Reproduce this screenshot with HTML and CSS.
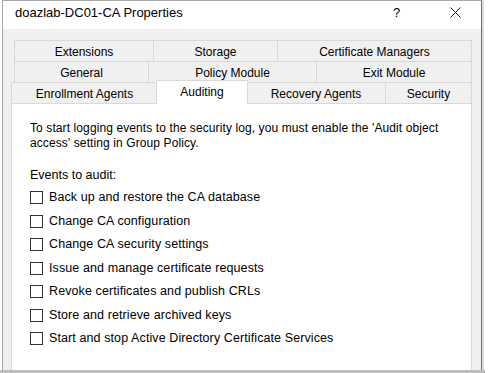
FILE: index.html
```html
<!DOCTYPE html>
<html lang="en">
<head>
    <meta charset="UTF-8">
    <title>doazlab-DC01-CA Properties</title>
    <link rel="stylesheet" href="styles.css">
</head>
<body>
    <div class="window">
        <div class="titlebar">
            <span class="title">doazlab-DC01-CA Properties</span>
            <span class="help">?</span>
            <svg class="close" width="11" height="11" viewBox="0 0 11 11">
                <path d="M0.5 0.5 L10.5 10.5 M10.5 0.5 L0.5 10.5" stroke="#1a1a1a" stroke-width="1" fill="none"/>
            </svg>
        </div>

        <div class="content">
            <div class="tab-row row-1">
                <div class="tab">Extensions</div>
                <div class="tab">Storage</div>
                <div class="tab">Certificate Managers</div>
            </div>
            <div class="tab-row row-2">
                <div class="tab">General</div>
                <div class="tab">Policy Module</div>
                <div class="tab">Exit Module</div>
            </div>
            <div class="tab-row row-3">
                <div class="tab">Enrollment Agents</div>
                <div class="tab active">Auditing</div>
                <div class="tab">Recovery Agents</div>
                <div class="tab">Security</div>
            </div>

            <div class="panel">
                <p class="intro">To start logging events to the security log, you must enable the 'Audit object<br>access' setting in Group Policy.</p>
                <p class="events-label">Events to audit:</p>
                <ul class="events">
                    <li><span class="check"></span>Back up and restore the CA database</li>
                    <li><span class="check"></span>Change CA configuration</li>
                    <li><span class="check"></span>Change CA security settings</li>
                    <li><span class="check"></span>Issue and manage certificate requests</li>
                    <li><span class="check"></span>Revoke certificates and publish CRLs</li>
                    <li><span class="check"></span>Store and retrieve archived keys</li>
                    <li><span class="check"></span>Start and stop Active Directory Certificate Services</li>
                </ul>
            </div>
        </div>
    </div>
    <div class="bottom-edge"></div>
</body>
</html>
```

FILE: styles.css
```css
:root {
    --face: #f0f0f0;
    --line: #d9d9d9;
    --frame: #a8a8a8;
}

* {
    margin: 0;
    padding: 0;
    box-sizing: border-box;
}

body {
    width: 490px;
    height: 373px;
    overflow: hidden;
    background: #fff;
    font-family: 'Liberation Sans', Arial, sans-serif;
    font-size: 12px;
    color: #000;
}

.window {
    margin-left: 2px;
    width: 480px;
    height: 370px;
    border: 1px solid var(--frame);
    border-right-color: #707070;
    border-bottom: none;
    box-shadow: 2px 0 0 #dcdcdc;
    display: flex;
    flex-direction: column;
}

/* title bar */
.titlebar {
    height: 28px;
    background: #fff;
    display: flex;
    align-items: flex-start;
    padding-left: 12px;
    font-size: 13px;
    line-height: 23px;
}

.title {
    flex: 1;
}

.help {
    width: 8px;
    margin-right: 49px;
}

.close {
    margin-top: 6px;
    margin-right: 20px;
}

/* body */
.content {
    flex: 1;
    background: var(--face);
    padding: 11px 9px 0 8px;
    display: flex;
    flex-direction: column;
}

.tab-row {
    display: grid;
    height: 21px;
}

.row-1 {
    margin-left: 3px;
    grid-template-columns: 139px 124px 1fr;
}

.row-2 {
    margin-left: 3px;
    grid-template-columns: 134px 168px 1fr;
}

.row-3 {
    grid-template-columns: 146px 90px 138px 1fr;
}

.tab {
    background: var(--face);
    border-top: 1px solid var(--line);
    border-left: 1px solid var(--line);
    text-align: center;
    padding-top: 3px;
    line-height: 17px;
    white-space: nowrap;
}

.tab:last-child {
    border-right: 1px solid var(--line);
}

.tab.active {
    position: relative;
    z-index: 1;
    height: 24px;
    margin: -2px -1px 0 -1px;
    background: #fff;
    border-right: 1px solid var(--line);
}

.tab.active + .tab {
    border-left: none;
}

/* panel */
.panel {
    flex: 1;
    background: #fff;
    border: 1px solid var(--line);
    border-bottom: none;
    padding: 17px 10px 0 18px;
    line-height: 15px;
}

.intro {
    white-space: nowrap;
    letter-spacing: 0.1px;
}

.events-label {
    margin-top: 17px;
    font-size: 12.5px;
}

.events {
    list-style: none;
    margin-top: 3px;
}

.events li {
    height: 23.5px;
    display: flex;
    align-items: center;
    white-space: nowrap;
    font-size: 12.5px;
    letter-spacing: 0.1px;
}

.check {
    width: 13px;
    height: 13px;
    border: 1px solid #333;
    background: #fff;
    margin-right: 6px;
    flex-shrink: 0;
}

.bottom-edge {
    height: 3px;
    width: 485px;
    background: #bdbdbd;
}
```
